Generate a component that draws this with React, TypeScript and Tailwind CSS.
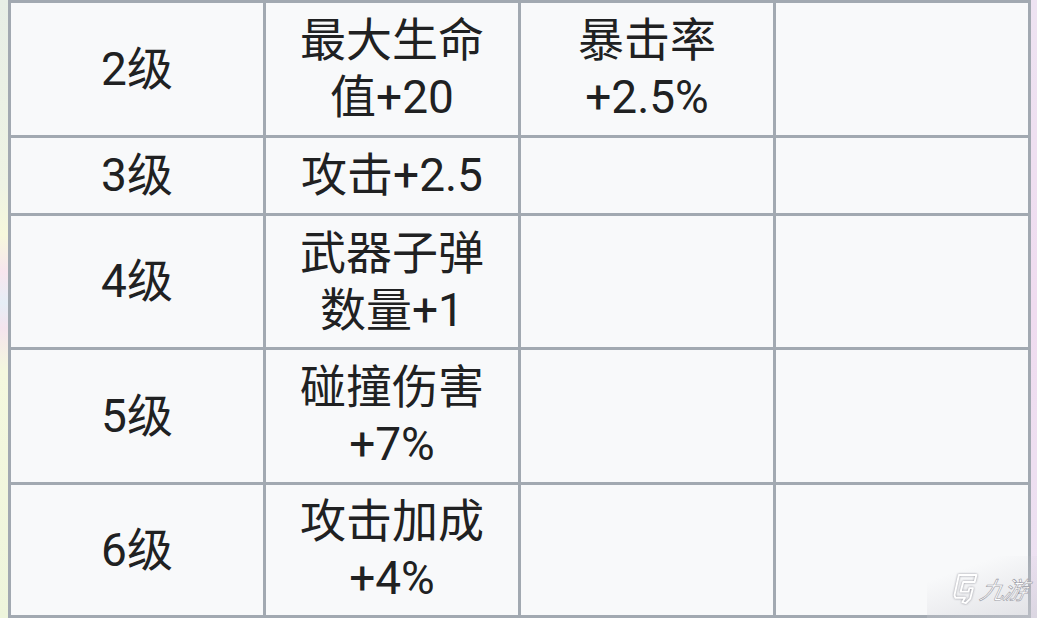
import React from "react";

type Row = { level: string; bonus: string[]; extra: string[] };

const rows: Row[] = [
  { level: "2级", bonus: ["最大生命", "值+20"], extra: ["暴击率", "+2.5%"] },
  { level: "3级", bonus: ["攻击+2.5"], extra: [] },
  { level: "4级", bonus: ["武器子弹", "数量+1"], extra: [] },
  { level: "5级", bonus: ["碰撞伤害", "+7%"], extra: [] },
  { level: "6级", bonus: ["攻击加成", "+4%"], extra: [] },
];

const Cell = ({ lines }: { lines: string[] }) => (
  <div className="bg-[#f8f9fa] flex flex-col items-center justify-center text-center px-3">
    {lines.map((line, i) => (
      <span key={i} className="block whitespace-nowrap">
        {line}
      </span>
    ))}
  </div>
);

const Watermark = () => (
  <div className="absolute right-0 bottom-0 w-[110px] h-[62px] bg-[linear-gradient(160deg,rgba(255,255,255,0)_25%,rgba(205,205,212,0.55)_100%)] flex items-center pl-[24px] pt-[4px] gap-[2px]">
    <svg width="28" height="36" viewBox="0 0 32 38" className="shrink-0 drop-shadow-[0_0_1px_rgba(120,120,130,0.8)]">
      <path
        d="M9 3 H29 L27 11 H14 L11 22 H20 L21 18 H25 L22 30 L17 35 L13 34 L16 29 H5 L4 26 Z"
        fill="none"
        stroke="#ffffff"
        strokeWidth="2.2"
        strokeLinejoin="round"
      />
    </svg>
    <span className="shrink-0 text-[24px] leading-none italic text-white tracking-[-1px] [-webkit-text-stroke:0.6px_#9a9aa4] font-['Noto_Sans_CJK_SC',sans-serif] -skew-x-12">
      九游
    </span>
  </div>
);

export default function App() {
  return (
    <div className="relative w-[1037px] h-[618px] overflow-hidden flex bg-[#f3f6ea] font-['Roboto','Noto_Sans_CJK_SC',sans-serif] text-[46px] leading-[57px] text-[#202122]">
      <div className="w-[8px] shrink-0 bg-[linear-gradient(180deg,#e7eee6_0%,#eef3e4_30%,#f6f8dc_38%,#f8e6ef_44%,#e6eef6_49%,#f5e4ee_53%,#f4f8de_60%,#eef5dc_100%)]" />
      <div className="grid grid-cols-[repeat(4,252px)] grid-rows-[132px_75px_131px_132px_130px] gap-[3px] bg-[#a2a9b1] p-[3px] shrink-0">
        {rows.map((row) => (
          <React.Fragment key={row.level}>
            <Cell lines={[row.level]} />
            <Cell lines={row.bonus} />
            <Cell lines={row.extra} />
            <Cell lines={[]} />
          </React.Fragment>
        ))}
      </div>
      <div className="flex-1 bg-[linear-gradient(180deg,#eee3f2_0%,#f0dcf0_50%,#ece2f2_100%)]" />
      <Watermark />
    </div>
  );
}
